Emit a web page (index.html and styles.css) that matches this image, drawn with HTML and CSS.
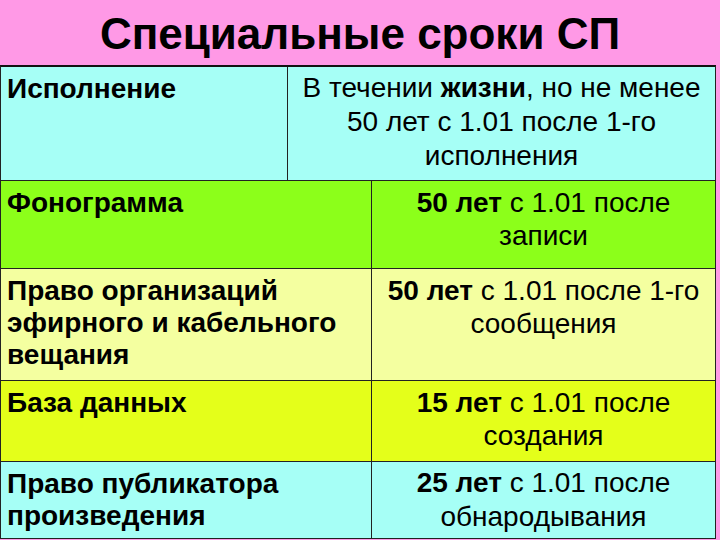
FILE: index.html
```html
<!DOCTYPE html>
<html lang="ru">
<head>
<meta charset="utf-8">
<link rel="stylesheet" href="styles.css">
</head>
<body>
<div class="slide">
  <h1 class="title">Специальные сроки СП</h1>
  <div class="table">
    <div class="row r1 cyan">
      <div class="cell left">Исполнение</div>
      <div class="cell right">В течении <b>жизни</b>, но не менее 50 лет с 1.01 после 1-го исполнения</div>
    </div>
    <div class="row r2 green">
      <div class="cell left">Фонограмма</div>
      <div class="cell right"><b>50 лет</b> с 1.01 после записи</div>
    </div>
    <div class="row r3 lightyellow">
      <div class="cell left">Право организаций эфирного и кабельного вещания</div>
      <div class="cell right"><b>50 лет</b> с 1.01 после 1-го сообщения</div>
    </div>
    <div class="row r4 yellow">
      <div class="cell left">База данных</div>
      <div class="cell right"><b>15 лет</b> с 1.01 после создания</div>
    </div>
    <div class="row r5 cyan">
      <div class="cell left">Право публикатора произведения</div>
      <div class="cell right"><b>25 лет</b> с 1.01 после обнародывания</div>
    </div>
  </div>
</div>
</body>
</html>
```
FILE: styles.css
```css
html, body {
  margin: 0;
  padding: 0;
}
body {
  width: 720px;
  height: 540px;
  background: #ff99e6;
  font-family: "Liberation Sans", Arial, sans-serif;
  color: #000;
  overflow: hidden;
}
.slide {
  display: flex;
  flex-direction: column;
}
.title {
  margin: 0;
  height: 65px;
  display: flex;
  align-items: center;
  justify-content: center;
  font-size: 44px;
  font-weight: bold;
  padding-top: 2px;
  box-sizing: border-box;
}
.table {
  width: 716px;
  border-top: 2px solid #111;
  border-left: 1px solid #222;
  border-right: 1px solid #222;
  border-bottom: 1px solid #222;
  box-sizing: border-box;
}
.row {
  display: grid;
  grid-template-columns: 371px 1fr;
  border-top: 1px solid #222;
  box-sizing: border-box;
}
.row.r1 {
  grid-template-columns: 287px 1fr;
  border-top: none;
  height: 113px;
}
.r2 { height: 88px; }
.r3 { height: 112px; }
.r4 { height: 81px; }
.r5 { height: 77px; }
.cyan { background: #a6fff6; }
.green { background: #8cff1a; }
.lightyellow { background: #f4ffa0; }
.yellow { background: #e4ff1a; }
.cell {
  font-size: 28px;
  line-height: 33px;
  padding: 5px 8px 0 8px;
}
.left {
  font-weight: bold;
  border-right: 1px solid #222;
  line-height: 32px;
  padding-top: 6px;
  padding-left: 6px;
}
.right {
  text-align: center;
  padding-left: 10px;
  padding-right: 10px;
}
.r1 .right {
  padding-left: 6px;
  padding-right: 6px;
  line-height: 34px;
  padding-top: 4px;
}
.r5 .right { line-height: 34px; padding-top: 4px; }
```
